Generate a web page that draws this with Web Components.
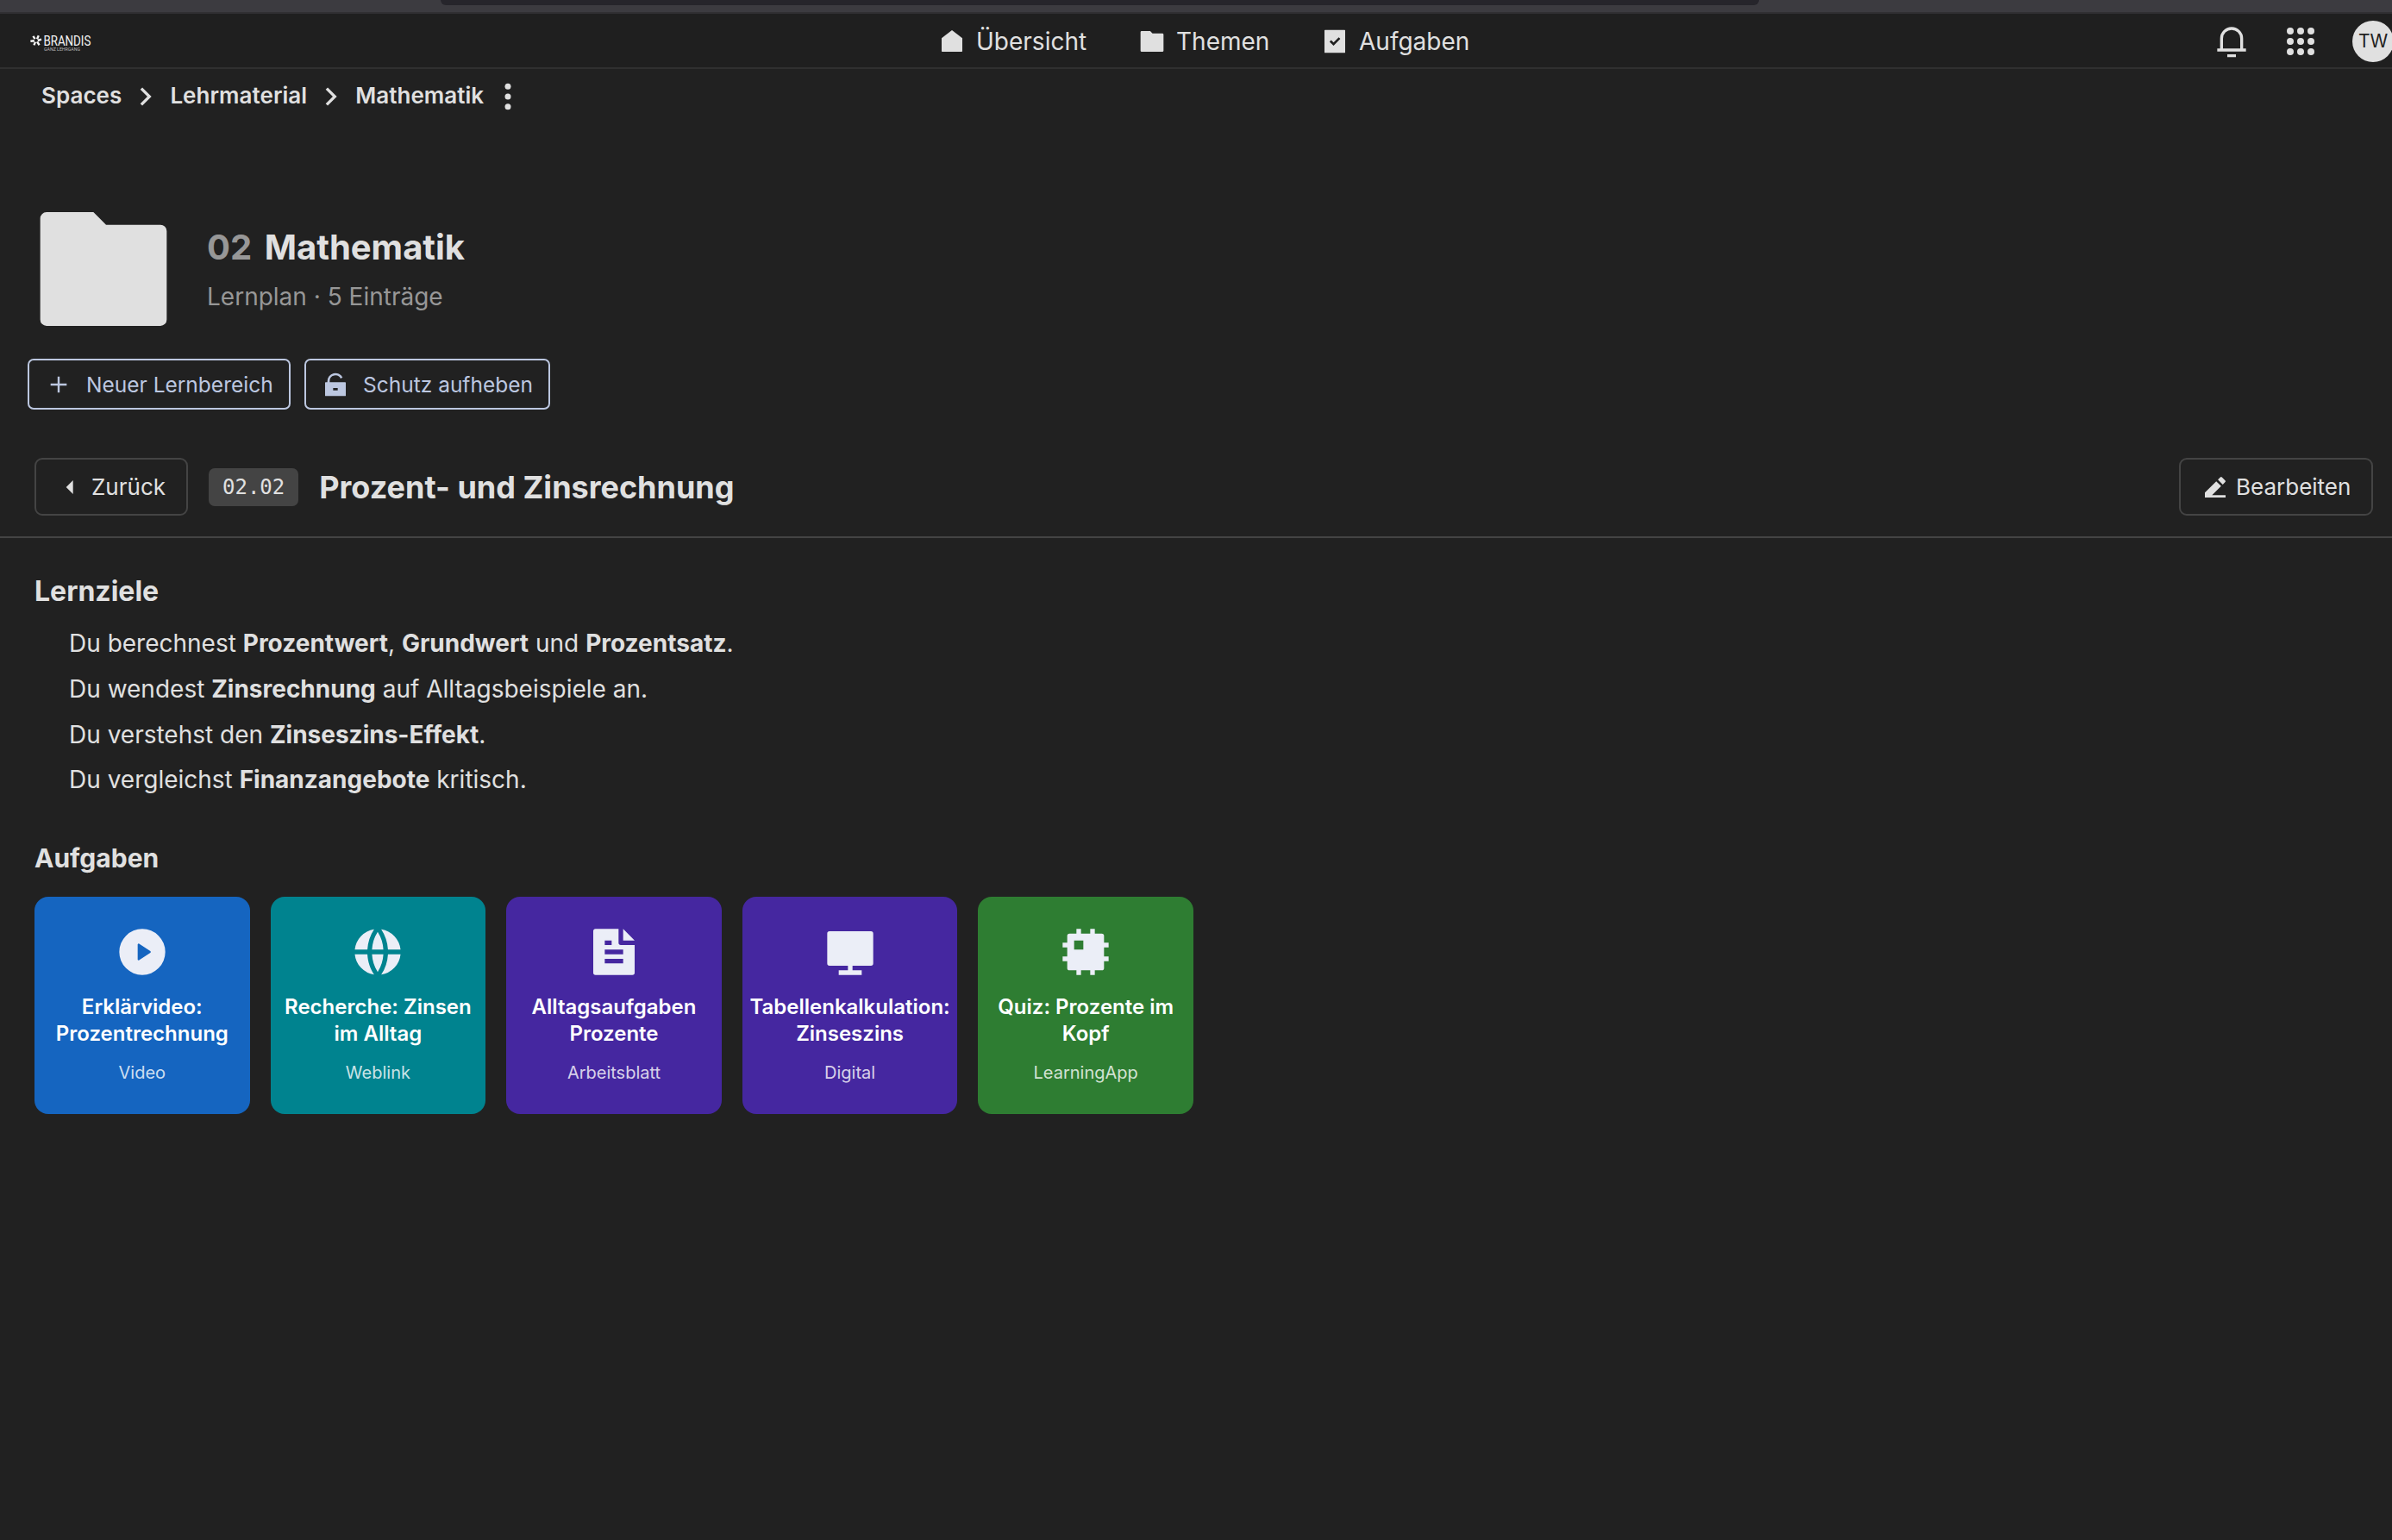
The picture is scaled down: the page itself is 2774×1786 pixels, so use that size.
<!DOCTYPE html>
<html lang="de">
<head>
<meta charset="utf-8">
<title>Mathematik</title>
<style>
  body {
    margin: 0;
    background: #212121;
    color: #e0e0e0;
    font-family: Inter, "Liberation Sans", sans-serif;
    height: 1786px;
    overflow: hidden;
  }
</style>
</head>
<body>
<learning-page></learning-page>

<script>
const colors = {
  page: "#212121",
  header: "#1f1f1f",
  line: "#303030",
  border: "#444444",
  text: "#e0e0e0",
  muted: "#979797",
  accent: "#bcc7e0"
};

// All icons live on a 24x24 grid
const icons = {
  home: `<path d="M3.5 21a.5.5 0 0 1-.5-.5V9.2L12 2.2l9 7v11.3a.5.5 0 0 1-.5.5z"/>`,
  folder: `<path d="M12.41 5H21a1 1 0 0 1 1 1v14a1 1 0 0 1-1 1H3a1 1 0 0 1-1-1V4a1 1 0 0 1 1-1h7.41z"/>`,
  check: `<path fill-rule="evenodd" d="M3.5 2h17a.5.5 0 0 1 .5.5v19a.5.5 0 0 1-.5.5h-17a.5.5 0 0 1-.5-.5v-19a.5.5 0 0 1 .5-.5zM10.9 15.8l5.9-6-1.4-1.4-4.5 4.6-2.1-2.1-1.4 1.4z"/>`,
  bell: `<path fill-rule="evenodd" d="M4 17v-7a8 8 0 1 1 16 0v7h2v2H2v-2zM18 17v-7a6 6 0 0 0-12 0v7zM9 21h6v2H9z"/>`,
  apps: `<circle cx="4.8" cy="4.8" r="2.4"/><circle cx="12" cy="4.8" r="2.4"/><circle cx="19.2" cy="4.8" r="2.4"/>
    <circle cx="4.8" cy="12" r="2.4"/><circle cx="12" cy="12" r="2.4"/><circle cx="19.2" cy="12" r="2.4"/>
    <circle cx="4.8" cy="19.2" r="2.4"/><circle cx="12" cy="19.2" r="2.4"/><circle cx="19.2" cy="19.2" r="2.4"/>`,
  chevron: `<path d="M13.17 12L8.22 7.05l1.42-1.41L16 12l-6.36 6.36-1.42-1.41z"/>`,
  more: `<circle cx="12" cy="5" r="2.1"/><circle cx="12" cy="12" r="2.1"/><circle cx="12" cy="19" r="2.1"/>`,
  plus: `<path d="M11.1 5h1.8v6.1H19v1.8h-6.1V19h-1.8v-6.1H5v-1.8h6.1z"/>`,
  unlock: `<path fill-rule="evenodd" d="M7 10h13.5a.5.5 0 0 1 .5.5v11a.5.5 0 0 1-.5.5h-17a.5.5 0 0 1-.5-.5v-11a.5.5 0 0 1 .5-.5H5V9a7 7 0 0 1 13.26-3.13l-1.79.89A5 5 0 0 0 7 9zM10 15v2h4v-2z"/>`,
  back: `<path d="M8 12l6-6v12z"/>`,
  edit: `<path d="M9.24 19H21v2H3v-4.25l9.9-9.9 4.24 4.25zM14.31 5.44l2.13-2.12a1 1 0 0 1 1.41 0l2.83 2.83a1 1 0 0 1 0 1.41l-2.12 2.12z"/>`,
  play: `<path fill-rule="evenodd" d="M12 22a10 10 0 1 1 0-20 10 10 0 0 1 0 20zM10.62 8.41a.4.4 0 0 0-.62.34v6.5a.4.4 0 0 0 .62.34l4.88-3.26a.4.4 0 0 0 0-.66z"/>`,
  globe: `<path d="M2.05 13h5.48c.18 3.27 1.23 6.3 2.92 8.88A10 10 0 0 1 2.05 13zM2.05 11a10 10 0 0 1 8.4-8.88A17.9 17.9 0 0 0 7.53 11zM21.95 11h-5.48a17.9 17.9 0 0 0-2.92-8.88A10 10 0 0 1 21.95 11zM21.95 13a10 10 0 0 1-8.4 8.88A17.9 17.9 0 0 0 16.47 13zM9.53 13h4.94A15.9 15.9 0 0 1 12 20.71 15.9 15.9 0 0 1 9.53 13zM9.53 11A15.9 15.9 0 0 1 12 3.29 15.9 15.9 0 0 1 14.47 11z"/>`,
  file: `<path fill-rule="evenodd" d="M21 9v12a1 1 0 0 1-1 1H4a1 1 0 0 1-1-1V3a1 1 0 0 1 1-1h10v6a1 1 0 0 0 1 1zM21 7h-5V2zM8 7v2h3V7zM8 11v2h8v-2zM8 15v2h8v-2z"/>`,
  screen: `<path d="M13 18v2h4v2H7v-2h4v-2H3a1 1 0 0 1-1-1V4a1 1 0 0 1 1-1h18a1 1 0 0 1 1 1v13a1 1 0 0 1-1 1z"/>`,
  chip: `<path fill-rule="evenodd" d="M14 20h-4v2H8v-2H5a1 1 0 0 1-1-1v-3H2v-2h2v-4H2V8h2V5a1 1 0 0 1 1-1h3V2h2v2h4V2h2v2h3a1 1 0 0 1 1 1v3h2v2h-2v4h2v2h-2v3a1 1 0 0 1-1 1h-3v2h-2zM7 7v4h4V7z"/>`
};

class BaseElement extends HTMLElement {
  constructor() {
    super();
    const template = document.createElement("template");
    template.innerHTML = this.getInnerHTML();
    this.attachShadow({ mode: "open" });
    this.shadowRoot.appendChild(template.content.cloneNode(true));
  }
}

class UiIcon extends BaseElement {
  getInnerHTML() {
    const size = this.getAttribute("size") || 32;
    return /*html*/ `
    <style>
      :host { display: block; flex: none; width: ${size}px; height: ${size}px; }
      svg { display: block; width: 100%; height: 100%; }
    </style>
    <svg viewBox="0 0 24 24" fill="currentColor">${icons[this.getAttribute("name")]}</svg>`;
  }
}

class BrandLogo extends BaseElement {
  getInnerHTML() {
    return /*html*/ `
    <style>
      :host { display: block; width: 76px; height: 28px; }
      svg { display: block; overflow: visible; }
    </style>
    <svg width="76" height="28" viewBox="0 0 76 28">
      <g stroke="#f4f4f4" stroke-width="2.4">
        <path d="M8 11.2L9.8 7.2M8.8 13L13 11.6M8 14.4L10.6 18.2M6 14.6L4.4 18.4M4.8 13.2L0.4 13.8M5.6 11.2L3.4 7.8"/>
      </g>
      <text x="15.4" y="18.8" font-family="Roboto, sans-serif" font-size="16.5" fill="#f4f4f4" textLength="55" lengthAdjust="spacingAndGlyphs">BRANDIS</text>
      <text x="16" y="24.8" font-family="Roboto, sans-serif" font-size="5.2" fill="#b4b4b4" textLength="42" lengthAdjust="spacingAndGlyphs">GANZ LEHRGANG</text>
    </svg>`;
  }
}

class NavItem extends BaseElement {
  getInnerHTML() {
    return /*html*/ `
    <style>
      :host { display: flex; align-items: center; gap: 12px; font-size: 28px; line-height: 34px; white-space: nowrap; }
    </style>
    <ui-icon name="${this.getAttribute("icon")}"></ui-icon>
    <span><slot></slot></span>`;
  }
}

class AppHeader extends BaseElement {
  getInnerHTML() {
    return /*html*/ `
    <style>
      :host { display: block; }
      .chrome { height: 14px; background: #3c3b40; border-bottom: 2px solid #302f32; padding-left: 511px; }
      .address { width: 1529px; height: 6px; background: #26252b; border-radius: 0 0 12px 12px; }
      .bar { box-sizing: border-box; height: 64px; background: ${colors.header}; border-bottom: 2px solid ${colors.line};
        display: grid; grid-template-columns: 1053px 1fr auto; align-items: center; padding: 2px 0 0 35px; }
      nav { display: grid; grid-template-columns: 232px 212px auto; justify-content: start; }
      .tools { display: flex; align-items: center; gap: 40px; margin-right: -2px; }
      .avatar { width: 48px; height: 48px; border-radius: 50%; background: ${colors.text}; color: #212121;
        font-size: 21px; line-height: 48px; text-align: center; }
    </style>
    <div class="chrome"><div class="address"></div></div>
    <div class="bar">
      <brand-logo></brand-logo>
      <nav>
        <nav-item icon="home">Übersicht</nav-item>
        <nav-item icon="folder">Themen</nav-item>
        <nav-item icon="check">Aufgaben</nav-item>
      </nav>
      <div class="tools">
        <ui-icon name="bell" size="40"></ui-icon>
        <ui-icon name="apps" size="40"></ui-icon>
        <div class="avatar">TW</div>
      </div>
    </div>`;
  }
}

class BreadCrumb extends BaseElement {
  getInnerHTML() {
    return /*html*/ `
    <style>
      :host { display: flex; align-items: center; height: 40px; padding: 12px 0 0 48px; font-size: 26px; font-weight: 600; line-height: 32px; letter-spacing: 0.04px; }
      span { margin-bottom: 2px; }
      .sep { margin: 0 8px; }
      .more { margin-left: 8px; }
    </style>
    <span>Spaces</span>
    <ui-icon class="sep" name="chevron" size="40"></ui-icon>
    <span>Lehrmaterial</span>
    <ui-icon class="sep" name="chevron" size="40"></ui-icon>
    <span>Mathematik</span>
    <ui-icon class="more" name="more" size="40"></ui-icon>`;
  }
}

class SpaceTitle extends BaseElement {
  getInnerHTML() {
    return /*html*/ `
    <style>
      :host { display: flex; gap: 32px; height: 176px; padding: 92px 0 0 32px; }
      .text { padding-top: 39px; }
      h1 { margin: 0; font-size: 40px; line-height: 48px; font-weight: 700; }
      h1 span { color: ${colors.muted}; margin-right: 5px; }
      p { margin: 16px 0 0; font-size: 28px; line-height: 34px; color: ${colors.muted}; }
    </style>
    <ui-icon name="folder" size="176"></ui-icon>
    <div class="text">
      <h1><span>${this.getAttribute("number")}</span> <slot></slot></h1>
      <p>${this.getAttribute("info")}</p>
    </div>`;
  }
}

class UiButton extends BaseElement {
  getInnerHTML() {
    return /*html*/ `
    <style>
      :host { display: flex; align-items: center; box-sizing: border-box; height: 59px; border: 2px solid ${colors.accent};
        border-radius: 7px; color: ${colors.accent}; font-size: 24.5px; line-height: 32px; padding: 0 18px; gap: 16px; white-space: nowrap; }
      :host([plain]) { height: 67px; border-color: ${colors.border}; border-radius: 9px; color: ${colors.text};
        font-size: 26px; padding: 0 24px; gap: 8px; }
    </style>
    <ui-icon name="${this.getAttribute("icon")}"></ui-icon>
    <span><slot></slot></span>`;
  }
}

class TopicBar extends BaseElement {
  getInnerHTML() {
    return /*html*/ `
    <style>
      :host { display: flex; align-items: center; gap: 24px; height: 67px; margin-top: 56px; padding: 0 22px 24px 40px; border-bottom: 2px solid ${colors.border}; }
      code { background: #444444; border-radius: 7px; padding: 0 16px; font-family: "DejaVu Sans Mono", monospace; font-size: 24px; line-height: 44px; }
      h2 { flex: 1; margin: 0; font-size: 36px; line-height: 44px; font-weight: 700; }
      .back { width: 178px; }
      .edit { width: 225px; }
    </style>
    <ui-button plain class="back" icon="back">Zurück</ui-button>
    <code>${this.getAttribute("number")}</code>
    <h2><slot></slot></h2>
    <ui-button plain class="edit" icon="edit">Bearbeiten</ui-button>`;
  }
}

class GoalList extends BaseElement {
  getInnerHTML() {
    return /*html*/ `
    <style>
      :host { display: block; padding: 42px 40px 0; }
      h3 { margin: 0; font-size: 32px; line-height: 40px; font-weight: 700; }
      .goals { display: grid; gap: 8px; padding: 18px 0 0 40px; font-size: 28px; line-height: 44.8px; }
    </style>
    <h3>Lernziele</h3>
    <div class="goals"><slot></slot></div>`;
  }
}

class TaskCard extends BaseElement {
  getInnerHTML() {
    return /*html*/ `
    <style>
      :host { display: flex; flex-direction: column; align-items: center; box-sizing: border-box; height: 252px;
        padding-top: 32px; border-radius: 16px; background: ${this.getAttribute("color")}; text-align: center; }
      ui-icon { color: #ebeef7; }
      .name { margin-top: 16px; padding: 0 8px; font-size: 24px; line-height: 31.2px; font-weight: 600; color: #ffffff; }
      .kind { margin-top: 18px; font-size: 20px; line-height: 24px; color: rgba(255, 255, 255, 0.8); }
    </style>
    <ui-icon name="${this.getAttribute("icon")}" size="64"></ui-icon>
    <div class="name"><slot></slot></div>
    <div class="kind">${this.getAttribute("kind")}</div>`;
  }
}

class TaskGrid extends BaseElement {
  getInnerHTML() {
    return /*html*/ `
    <style>
      :host { display: block; padding: 48.8px 40px 0; }
      h3 { margin: 0 0 26px; font-size: 30px; line-height: 38px; font-weight: 700; }
      .cards { display: grid; grid-template-columns: repeat(5, minmax(0, 1fr)); gap: 24px; width: 1344px; }
    </style>
    <h3>Aufgaben</h3>
    <div class="cards"><slot></slot></div>`;
  }
}

class LearningPage extends BaseElement {
  getInnerHTML() {
    return /*html*/ `
    <style>
      :host { display: block; }
      .actions { display: grid; grid-template-columns: 305px 285px; gap: 16px; padding: 16px 0 0 32px; }
    </style>
    <app-header></app-header>
    <bread-crumb></bread-crumb>
    <space-title number="02" info="Lernplan · 5 Einträge">Mathematik</space-title>
    <div class="actions">
      <ui-button icon="plus">Neuer Lernbereich</ui-button>
      <ui-button icon="unlock">Schutz aufheben</ui-button>
    </div>
    <topic-bar number="02.02">Prozent- und Zinsrechnung</topic-bar>
    <goal-list>
      <div>Du berechnest <b>Prozentwert</b>, <b>Grundwert</b> und <b>Prozentsatz</b>.</div>
      <div>Du wendest <b>Zinsrechnung</b> auf Alltagsbeispiele an.</div>
      <div>Du verstehst den <b>Zinseszins-Effekt</b>.</div>
      <div>Du vergleichst <b>Finanzangebote</b> kritisch.</div>
    </goal-list>
    <task-grid>
      <task-card icon="play" color="#1565c0" kind="Video">Erklärvideo: Prozentrechnung</task-card>
      <task-card icon="globe" color="#00838f" kind="Weblink">Recherche: Zinsen im Alltag</task-card>
      <task-card icon="file" color="#4527a0" kind="Arbeitsblatt">Alltagsaufgaben Prozente</task-card>
      <task-card icon="screen" color="#4527a0" kind="Digital">Tabellenkalkulation: Zinseszins</task-card>
      <task-card icon="chip" color="#2e7d32" kind="LearningApp">Quiz: Prozente im Kopf</task-card>
    </task-grid>`;
  }
}

// Children read their attributes in the constructor, so the page comes last
customElements.define("ui-icon", UiIcon);
customElements.define("brand-logo", BrandLogo);
customElements.define("nav-item", NavItem);
customElements.define("app-header", AppHeader);
customElements.define("bread-crumb", BreadCrumb);
customElements.define("space-title", SpaceTitle);
customElements.define("ui-button", UiButton);
customElements.define("topic-bar", TopicBar);
customElements.define("goal-list", GoalList);
customElements.define("task-card", TaskCard);
customElements.define("task-grid", TaskGrid);
customElements.define("learning-page", LearningPage);
</script>
</body>
</html>
